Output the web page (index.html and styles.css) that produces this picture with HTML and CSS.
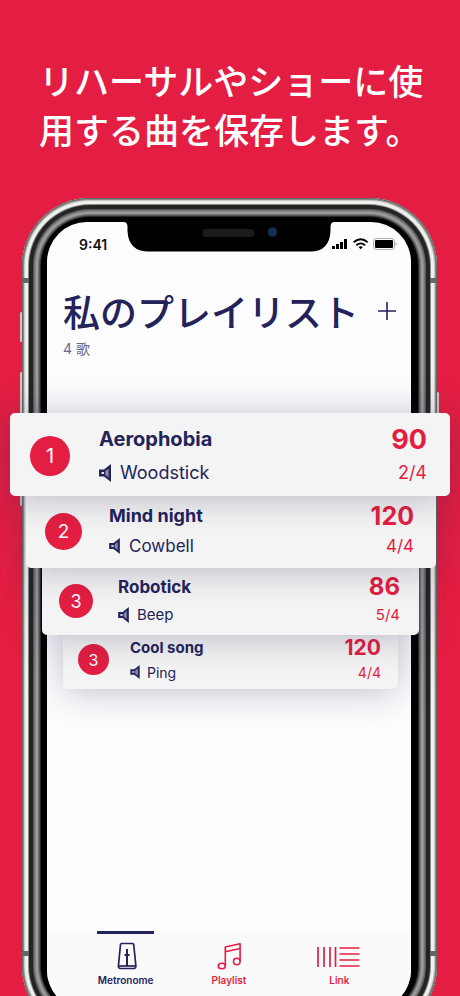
FILE: index.html
```html
<!DOCTYPE html>
<html lang="ja">
<head>
<meta charset="utf-8">
<meta name="viewport" content="width=device-width, initial-scale=1">
<title>私のプレイリスト</title>
<link rel="stylesheet" href="styles.css">
</head>
<body>
<svg class="symbols" aria-hidden="true">
  <symbol id="speaker" viewBox="0 0 12 18">
    <path d="M0 5.500H5L12 0v18L5 12.500H0z" fill="#23235a"/>
    <path d="M6.200 7.200 9.600 4.500v9L6.200 10.800z" fill="#8889a8"/>
    <path d="M2.500 8h2.500v2H2.500z" fill="#e4e4ea"/>
  </symbol>
</svg>
<main class="page">
  <h1 class="headline">リハーサルやショーに使<br>用する曲を保存します。</h1>
  <div class="phone">
    <span class="side mute"></span>
    <span class="side volume-up"></span>
    <span class="side volume-down"></span>
    <span class="side power"></span>
    <span class="antenna left top"></span>
    <span class="antenna right top"></span>
    <span class="antenna left bottom"></span>
    <span class="antenna right bottom"></span>
    <div class="screen">
      <svg class="notch" width="211" height="30" viewBox="0 0 211 30" aria-hidden="true">
        <path d="M0-2V0Q4 0 4 5V9Q5 29.500 25 29.500H187Q206 29.500 207 9V5Q207 0 211 0V-2z" fill="#000"/>
        <rect x="79" y="7" width="52" height="8" rx="4" fill="#1b1b1c"/>
        <circle cx="149" cy="10" r="5.500" fill="#131722"/>
        <circle cx="149" cy="10" r="3.500" fill="#183b70"/>
        <circle cx="149" cy="10" r="1.300" fill="#0a1730"/>
      </svg>
      <div class="status">
        <time>9:41</time>
        <svg width="66" height="12" viewBox="0 0 66 12" aria-hidden="true">
          <g fill="#000">
            <rect x="1" y="8" width="3" height="3"/><rect x="5" y="6" width="3" height="5"/><rect x="9" y="4" width="3" height="7"/><rect x="13" y="1" width="3" height="10"/>
            <rect x="44" y="2" width="18" height="8" rx="1"/>
          </g>
          <rect x="42.500" y=".5" width="21" height="11" rx="3" fill="none" stroke="#aaa"/>
          <path d="M65 4.500v3" stroke="#aaa"/>
          <g fill="none" stroke="#000" stroke-width="1.800"><path d="M22.700 4.200q7-5.800 14 0M25.300 7.200q4.400-3.600 8.800 0"/></g>
          <path d="M27.500 9q2.200-1.600 4.400 0l-2.200 2.200z"/>
        </svg>
      </div>
      <header class="title">
        <h2>私のプレイリスト</h2>
        <button type="button" aria-label="追加">
          <svg width="18" height="18" viewBox="0 0 18 18"><path d="M9 0v18M0 9h18" stroke="#23235a" stroke-width="1.600"/></svg>
        </button>
      </header>
      <p class="count">4 歌</p>
      <ol class="songs">
        <li class="card first">
          <span class="badge">1</span>
          <div class="song"><h3>Aerophobia</h3><p><svg class="speaker"><use href="#speaker"/></svg>Woodstick</p></div>
          <div class="tempo"><strong>90</strong><span>2/4</span></div>
        </li>
        <li class="card second">
          <span class="badge">2</span>
          <div class="song"><h3>Mind night</h3><p><svg class="speaker"><use href="#speaker"/></svg>Cowbell</p></div>
          <div class="tempo"><strong>120</strong><span>4/4</span></div>
        </li>
        <li class="card third">
          <span class="badge">3</span>
          <div class="song"><h3>Robotick</h3><p><svg class="speaker"><use href="#speaker"/></svg>Beep</p></div>
          <div class="tempo"><strong>86</strong><span>5/4</span></div>
        </li>
        <li class="card fourth">
          <span class="badge">3</span>
          <div class="song"><h3>Cool song</h3><p><svg class="speaker"><use href="#speaker"/></svg>Ping</p></div>
          <div class="tempo"><strong>120</strong><span>4/4</span></div>
        </li>
      </ol>
      <nav class="tabs">
        <a class="tab active" href="#metronome">
          <svg width="28" height="28" viewBox="0 0 28 28" fill="none" stroke="currentColor" stroke-width="1.700" stroke-linejoin="round"><path d="M9.500 1.500h11q1 0 1.200 1l2.100 20.500q.5 3.500-2 3.500H8.500q-2.500 0-2-3.500l2-20.500q.2-1 1-1z"/><path d="M7 24h16"/><path d="M15 7v17M12.500 13h5" stroke-width="2"/></svg>
          Metronome
        </a>
        <a class="tab" href="#playlist">
          <svg width="28" height="28" viewBox="0 0 28 28" fill="none" stroke="currentColor" stroke-width="1.600" stroke-linejoin="round"><ellipse cx="6.800" cy="24" rx="3.500" ry="2.800"/><ellipse cx="21.800" cy="19.500" rx="3.300" ry="3.300"/><path d="M10.300 24V5L25.100 1.700V19.500M10.300 9.800 25.100 6.500"/></svg>
          Playlist
        </a>
        <a class="tab" href="#link">
          <svg width="44" height="28" viewBox="0 0 44 28" fill="none" stroke="currentColor" stroke-width="1.700"><path d="M1 5v20M7 5v20M13 5v20M18.500 5v20M22.500 6h20M22.500 12h20M22.500 18h20M22.500 24h20"/></svg>
          Link
        </a>
      </nav>
    </div>
  </div>
</main>
</body>
</html>
```
FILE: styles.css
```css
* { box-sizing: border-box; }
body, h1, h2, h3, p, ol { margin: 0; padding: 0; }
body {
  background: #e31e42;
  color: #23235a;
  font-family: Inter, "Noto Sans CJK JP", sans-serif;
}
.symbols { display: none; }
.page {
  display: flex;
  flex-direction: column;
  height: 100vh;
  overflow: hidden;
}
.headline {
  padding: 55px 0 45px 39px;
  color: #fff;
  font: 500 35px/49px "Noto Sans CJK JP", sans-serif;
  white-space: nowrap;
}
.phone {
  position: relative;
  display: flex;
  flex: 1 0 auto;
  margin: 0 23px -38px 22px;
  padding: 24px 26px 24px 25px;
  border-radius: 68px;
  background: #000;
  box-shadow:
    inset 0 0 0 1px #686866,
    inset 0 0 0 2px #8b8b89,
    inset 0 0 0 3px #c8c8c5,
    inset 0 0 0 6px #f0f0ed,
    inset 0 0 0 7px #8a8a88,
    inset 0 0 0 11px #222523,
    inset 0 0 0 12px #5a5a5a,
    inset 0 0 0 13px #747474,
    inset 0 0 0 14px #8c8c8c,
    inset 0 0 0 16px #9a9a9a,
    inset 0 0 0 17px #777,
    inset 0 0 0 18px #555,
    inset 0 0 0 19px #2a2a2a;
}
.side {
  position: absolute;
  width: 2px;
  background: #d2c4c4;
  border-radius: 1px;
}
.mute { left: -2px; top: 114px; height: 30px; }
.volume-up { left: -2px; top: 174px; height: 58px; }
.volume-down { left: -2px; top: 250px; height: 58px; }
.power { right: -2px; top: 194px; height: 92px; }
.antenna {
  position: absolute;
  width: 7px;
  height: 5px;
  background: #666;
}
.antenna.left { left: 0; }
.antenna.right { right: 0; }
.antenna.top { top: 80px; }
.antenna.bottom { bottom: 78px; }
.screen {
  position: relative;
  display: flex;
  flex: 1;
  flex-direction: column;
  min-width: 0;
  border-radius: 40px;
  background: #fdfdff;
}
.notch {
  position: absolute;
  top: 0;
  left: 50%;
  transform: translateX(-50%);
}
.status {
  display: flex;
  align-items: center;
  justify-content: space-between;
  height: 44px;
  padding: 0 14px 0 32px;
  color: #111;
  font-size: 14px;
  font-weight: 600;
}
.title {
  display: flex;
  align-items: center;
  justify-content: space-between;
  height: 44px;
  margin-top: 23px;
  padding: 0 15px 0 16px;
}
.title h2 {
  font: 500 37px/44px "Noto Sans CJK JP", sans-serif;
  white-space: nowrap;
}
.title button {
  display: flex;
  padding: 0;
  border: 0;
  background: none;
}
.count {
  margin-top: 8px;
  padding-left: 16px;
  color: #686888;
  font-size: 14px;
  line-height: 16px;
}
.songs {
  display: flex;
  flex-direction: column;
  margin-top: 56px;
  list-style: none;
}
.card {
  position: relative;
  display: flex;
  align-items: center;
  border-radius: 5px;
  background: #f4f4f4;
  box-shadow: 0 2px 36px rgba(35, 35, 80, .3);
}
.badge {
  display: flex;
  flex: none;
  align-items: center;
  justify-content: center;
  border-radius: 50%;
  background: #e31e42;
  color: #fff;
}
.song { flex: 1; }
.song p { display: flex; align-items: center; }
.speaker { width: 12px; height: 18px; margin-right: 9px; }
.tempo {
  color: #e31e42;
  text-align: right;
}
.tempo strong, .tempo span { display: block; }
.song h3, .tempo strong { font-weight: 700; }

.first { z-index: 4; height: 83px; margin: 0 -39px 0 -37px; padding: 3px 23px 0 20px; }
.first .badge { width: 40px; height: 40px; margin-right: 29px; font-size: 20px; }
.first h3 { font-size: 20px; line-height: 33px; }
.first p, .first .tempo span { font-size: 18px; line-height: 33px; }
.first strong { font-size: 27px; line-height: 33px; }

.second { z-index: 3; height: 72px; margin: 0 -25px 0 -21px; padding: 0 22px 2px 19px; border-radius: 0 0 5px 5px; }
.second .badge { width: 37px; height: 37px; margin-right: 27px; font-size: 19px; }
.second h3 { font-size: 18px; line-height: 30px; }
.second p, .second .tempo span { font-size: 17px; line-height: 30px; }
.second strong { font-size: 25px; line-height: 30px; }
.second .speaker { width: 11px; height: 16px; margin-right: 9px; }

.third { z-index: 2; height: 67px; margin: 0 -8px 0 -5px; padding: 0 19px 1px 17px; border-radius: 0 0 5px 5px; }
.third .badge { width: 34px; height: 34px; margin-right: 25px; font-size: 18px; }
.third h3 { font-size: 17px; line-height: 28px; }
.third p, .third .tempo span { font-size: 15px; line-height: 28px; }
.third strong { font-size: 24px; line-height: 28px; }
.third .speaker { width: 11px; height: 16px; margin-right: 8px; }

.fourth { z-index: 1; height: 54px; margin: 0 13px 0 16px; padding: 0 17px 5px 15px; border-radius: 0 0 5px 5px; }
.fourth .badge { width: 31px; height: 31px; margin-right: 21px; font-size: 16px; }
.fourth h3 { font-size: 15px; line-height: 25px; }
.fourth p, .fourth .tempo span { font-size: 14px; line-height: 25px; }
.fourth strong { font-size: 21px; line-height: 25px; }
.fourth .speaker { width: 10px; height: 14px; margin-right: 7px; }

.tabs {
  display: grid;
  grid-template-columns: 103fr 103fr 117fr;
  justify-items: center;
  height: 79px;
  margin-top: auto;
  padding: 0 13px 0 27px;
  border-radius: 0 0 40px 40px;
  background: #fafafb;
}
.tab {
  display: flex;
  flex-direction: column;
  align-items: center;
  gap: 3px;
  min-width: 57px;
  padding-top: 8px;
  border-top: 3px solid transparent;
  color: #e31e42;
  font-size: 10px;
  font-weight: 600;
  line-height: 14px;
  text-decoration: none;
}
.tab.active {
  border-color: #23235a;
  color: #23235a;
}
```
